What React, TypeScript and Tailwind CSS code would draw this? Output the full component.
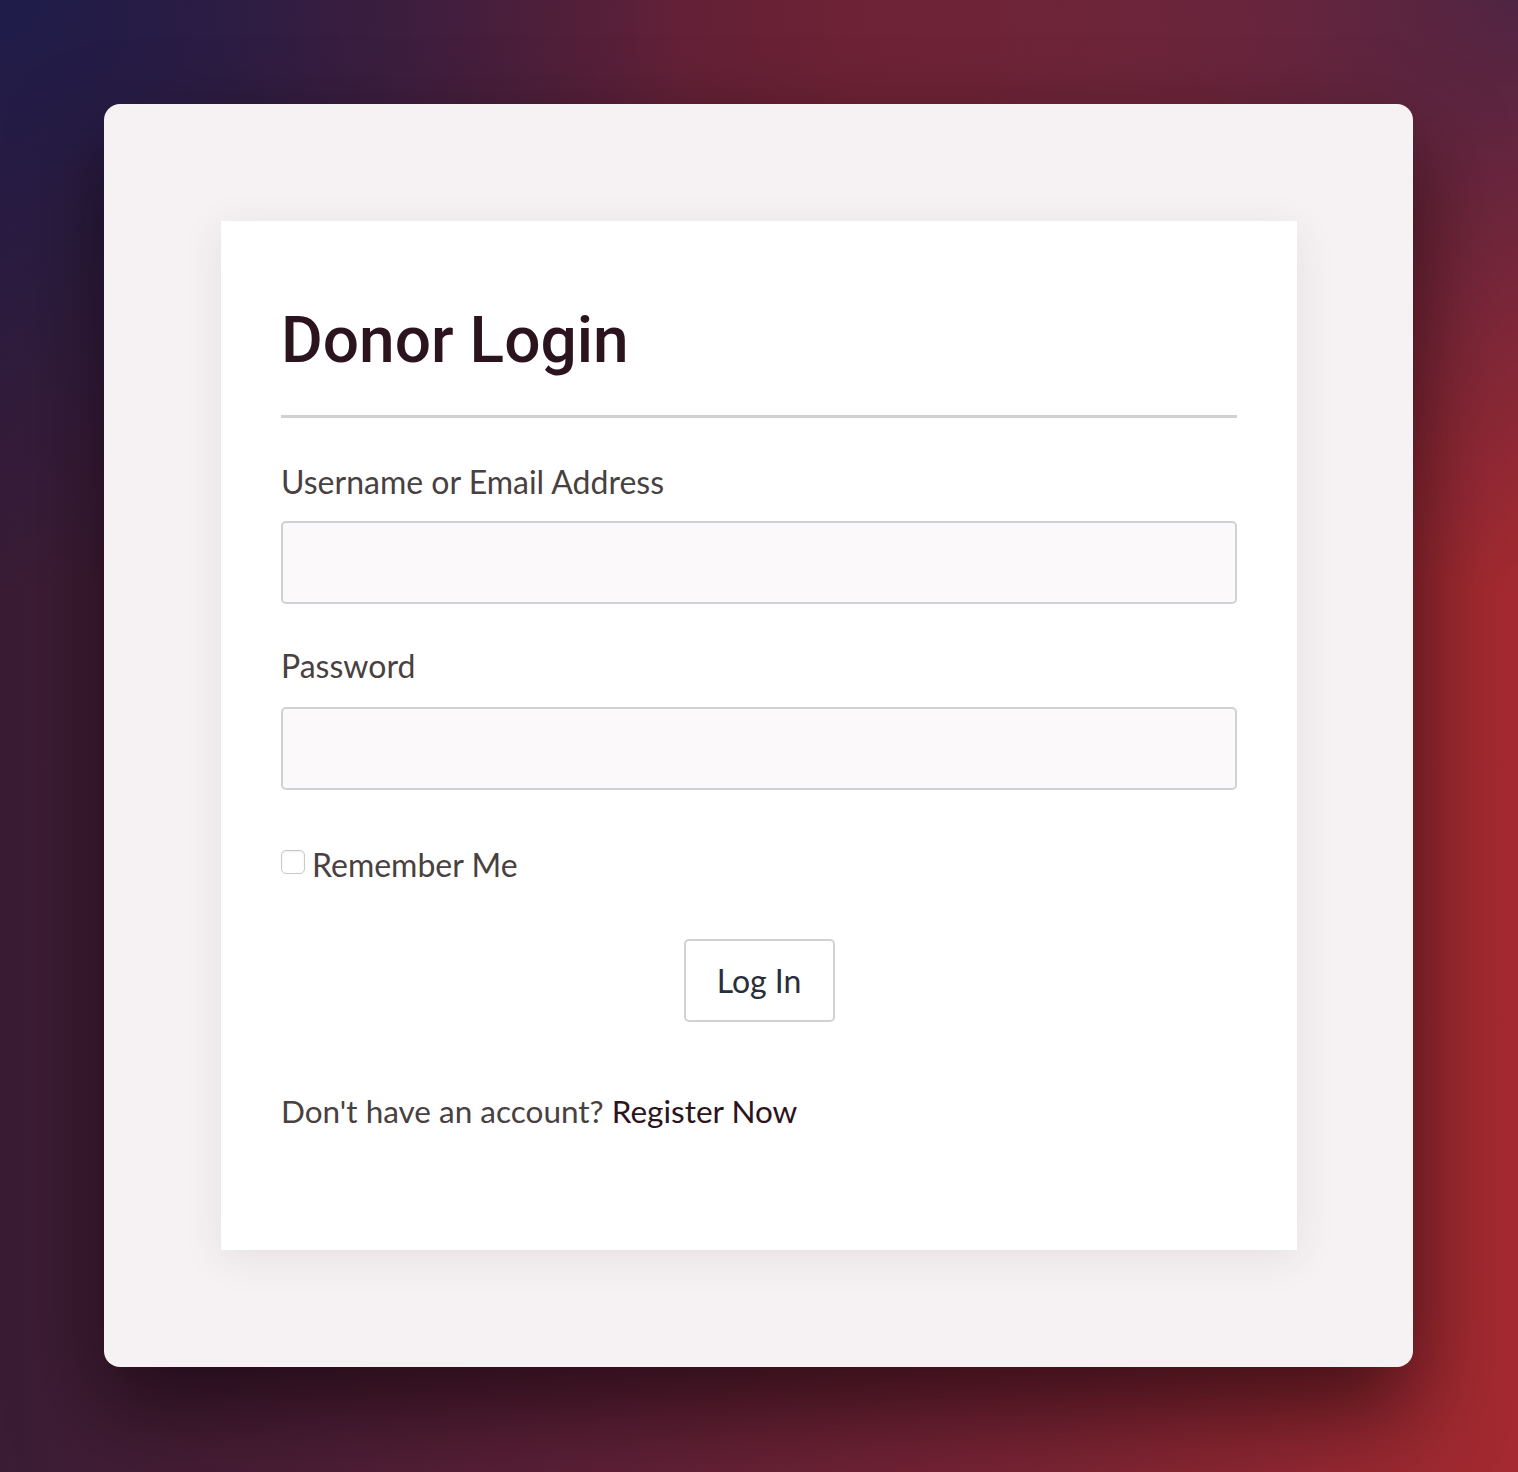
import React from "react";

export default function App() {
  return (
    <div className="min-h-[1472px] w-full bg-[radial-gradient(ellipse_45%_40%_at_0%_0%,#1f1c4a_0%,rgba(31,28,74,0)_100%),radial-gradient(ellipse_45%_40%_at_100%_0%,#4f2443_0%,rgba(79,36,67,0.6)_40%,rgba(79,36,67,0)_100%),linear-gradient(to_right,#3a1c35_0%,#5e2037_40%,#7c2434_70%,#a52a30_100%)] px-[104px] pt-[104px] pb-[105px]">
      <div className="w-[1309px] h-[1263px] rounded-[16px] bg-[#f6f2f3] shadow-[0_40px_90px_rgba(10,0,5,0.6)] p-[117px] pr-[116px]">
        <div className="w-[1076px] h-[1029px] bg-white shadow-[0_8px_40px_rgba(60,30,40,0.09)] px-[60px] pt-[80px]">
          <h1 className="font-['Roboto',sans-serif] font-medium text-[64px] leading-[80px] text-[#2b141d]">Donor Login</h1>
          <div className="mt-[34px] h-[3px] bg-[#cfd0d4]" />
          <form className="font-['Lato',sans-serif] text-[#48413f]">
            <label className="block mt-[44px] text-[32px] leading-[40px]">Username or Email Address</label>
            <input type="text" className="block mt-[19px] w-full h-[83px] rounded-[5px] border-2 border-[#d0d1d5] bg-[#fbf9f9] outline-none" />
            <label className="block mt-[42px] text-[32px] leading-[40px]">Password</label>
            <input type="password" className="block mt-[21px] w-full h-[83px] rounded-[5px] border-2 border-[#d0d1d5] bg-[#fbf9f9] outline-none" />
            <div className="mt-[55px] flex items-center">
              <span className="inline-block w-[24px] h-[24px] rounded-[5px] border border-[#c9c7c9] bg-white shadow-[inset_0_1px_2px_rgba(0,0,0,0.08)] mr-[7px] mb-[6px]" />
              <span className="text-[32px] leading-[40px]">Remember Me</span>
            </div>
            <div className="mt-[54px] flex justify-center">
              <button type="button" className="w-[151px] h-[83px] rounded-[5px] border-2 border-[#d0d1d5] bg-white text-[32px] text-[#2a2d3b] font-['Lato',sans-serif]">Log In</button>
            </div>
            <p className="mt-[69px] text-[31.5px] leading-[40px]">
              Don't have an account? <span className="text-[#2b141d]">Register Now</span>
            </p>
          </form>
        </div>
      </div>
    </div>
  );
}
